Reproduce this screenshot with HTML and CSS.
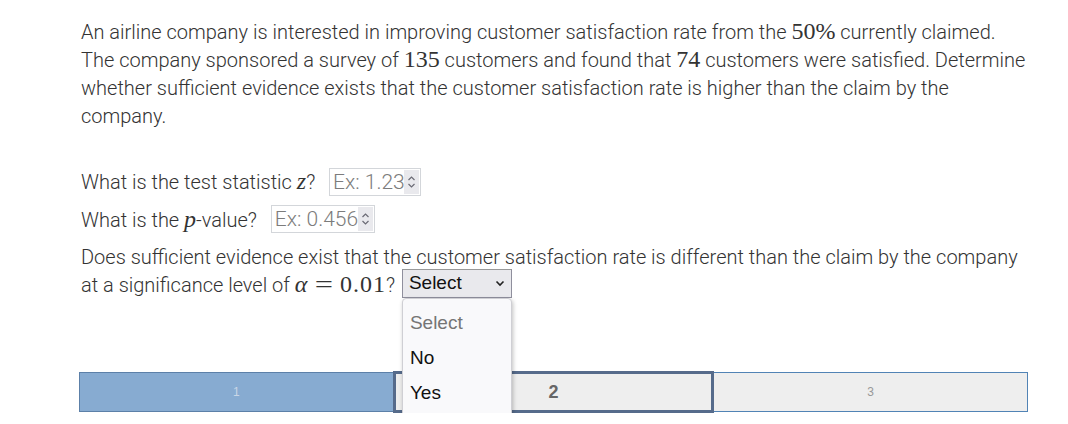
FILE: index.html
```html
<!DOCTYPE html>
<html>
<head>
<meta charset="utf-8">
<link rel="stylesheet" href="styles.css">
</head>
<body>
<div class="page">
  <p class="intro">An airline company is interested in improving customer satisfaction rate from the <span class="m">50%</span> currently claimed. The company sponsored a survey of <span class="m">135</span> customers and found that <span class="m">74</span> customers were satisfied. Determine whether sufficient evidence exists that the customer satisfaction rate is higher than the claim by the company.</p>

  <div class="q">What is the test statistic <span class="mi">z</span>? <span class="num w1"><span class="ph">Ex: 1.23</span><span class="spin"><svg width="9" height="14" viewBox="0 0 9 14"><path d="M1.5 5 L4.5 2 L7.5 5 M1.5 9 L4.5 12 L7.5 9" fill="none" stroke="#6b6b75" stroke-width="1.2"/></svg></span></span></div>
  <div class="q">What is the <span class="mi">p</span>-value? <span class="num w2"><span class="ph">Ex: 0.456</span><span class="spin"><svg width="9" height="14" viewBox="0 0 9 14"><path d="M1.5 5 L4.5 2 L7.5 5 M1.5 9 L4.5 12 L7.5 9" fill="none" stroke="#6b6b75" stroke-width="1.2"/></svg></span></span></div>
  <div class="q">Does sufficient evidence exist that the customer satisfaction rate is different than the claim by the company at a significance level of <span class="mi">α</span><span class="m rel">=</span><span class="m wide">0.01</span>? <span class="selwrap"><span class="sel">Select<svg class="chev" width="10" height="7" viewBox="0 0 10 7"><path d="M1.5 1.5 L5 5 L8.5 1.5" fill="none" stroke="#222" stroke-width="1.6"/></svg></span><span class="menu"><span class="opt dim">Select</span><span class="opt">No</span><span class="opt">Yes</span></span></span></div>

  <div class="progress">
    <div class="seg done">1</div>
    <div class="seg cur">2</div>
    <div class="seg todo">3</div>
  </div>
</div>
</body>
</html>
```
FILE: styles.css
```css
html, body { margin: 0; padding: 0; background: #fff; }
body { font-family: Roboto, "Noto Sans", sans-serif; font-weight: 300; color: #333; font-size: 20px; line-height: 28px; }
.page { width: 949px; padding: 18px 0 0 79px; }
.intro { margin: 0 0 38px 2px; }
.m { font-family: "Liberation Serif", "DejaVu Serif", serif; font-size: 24px; font-weight: 400; line-height: 16px; }
.mi { font-family: "Liberation Serif", "DejaVu Serif", serif; font-style: italic; font-weight: 400; font-size: 24px; line-height: 16px; }
.rel { display: inline-block; margin: 0 9px 0 10px; transform: scaleX(1.35); }
.wide { letter-spacing: 1px; }
.q { margin: 0 0 8px 2px; }
.num { display: inline-block; vertical-align: middle; height: 26px; border: 1px solid #d3d6da; margin-left: 9px; position: relative; top: -2px; overflow: hidden; }
.w1 { width: 90px; }
.w2 { width: 102px; }
.ph { display: block; overflow: hidden; white-space: nowrap; color: #7c7c7c; padding-left: 3px; line-height: 26px; font-size: 21px; }
.spin { position: absolute; right: 1px; top: 1px; bottom: 1px; width: 15px; background: #e9e9ed; display: flex; align-items: center; justify-content: center; }
.selwrap { position: relative; z-index: 10; display: inline-block; vertical-align: middle; top: -4px; margin-left: 2px; line-height: 20px; }
.sel { display: inline-flex; align-items: center; justify-content: space-between; box-sizing: border-box; width: 110px; height: 29px; padding: 0 6px 0 6px; background: #e9e9ed; border: 1px solid #8f8f9d; border-top-color: #999; font-family: "Liberation Sans", Arial, sans-serif; font-weight: 400; color: #111; font-size: 19px; }
.chev { margin-top: 1px; }
.menu { position: absolute; left: 0; top: 29px; width: 110px; box-sizing: border-box; background: #f9f9fb; border: 1px solid #cfcfd4; border-radius: 4px; box-shadow: 1px 2px 4px rgba(0,0,0,0.25); padding: 6px 0 8px; display: flex; flex-direction: column; z-index: 5; }
.opt { font-family: "Liberation Sans", Arial, sans-serif; font-weight: 400; font-size: 19px; color: #111; height: 35px; line-height: 35px; padding-left: 7px; }
.opt.dim { color: #757575; }
.progress { display: flex; align-items: center; margin-top: 69px; height: 42px; width: 949px; }
.seg { flex: 1; box-sizing: border-box; height: 40px; display: flex; align-items: center; justify-content: center; font-family: "Liberation Sans", Arial, sans-serif; font-weight: 400; }
.done { background: #87abd1; border: 1px solid #5c80a8; color: #c9d6e6; font-size: 12px; }
.cur { height: 42px; background: #eeeeee; border: 3px solid #566b8b; color: #666; font-size: 18px; font-weight: bold; margin-left: -1px; flex: 1.01; }
.todo { background: #eeeeee; border: 1px solid #5183b5; border-left: none; color: #999; font-size: 12px; }
```
